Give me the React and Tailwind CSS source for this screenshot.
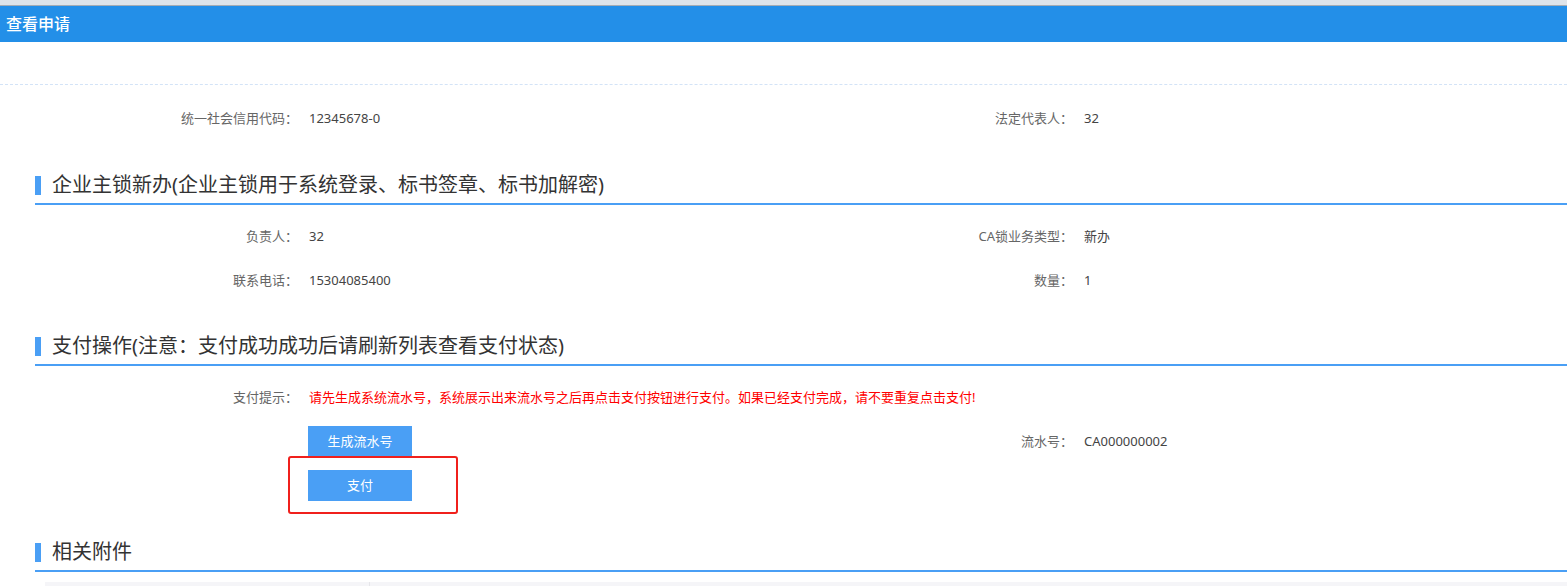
function Field({ label, value }) {
  return (
    <div className="flex items-center h-[44px]">
      <span className="w-[298px] text-right text-[13px] text-[#666]">{label}：</span>
      <span className="pl-[11px] text-[13px] text-[#444]">{value}</span>
    </div>
  )
}

function Row({ children }) {
  return <div className="grid grid-cols-[775px_775px]">{children}</div>
}

function SectionTitle({ title, className = '' }) {
  return (
    <div className={`ml-[35px] h-[38px] flex items-center border-b-2 border-[#4a9ff5] ${className}`}>
      <span className="w-[6px] h-[19px] bg-[#4a9ff5]"></span>
      <span className="ml-[11px] text-[20px] text-[#333] leading-none">{title}</span>
    </div>
  )
}

export default function App() {
  return (
    <div className="relative w-[1567px] h-[586px] overflow-hidden bg-white" style={{ fontFamily: '"Noto Sans", "Noto Sans CJK SC", sans-serif' }}>
      <div className="h-[6px] bg-[#dde4ea] border-b border-[#a4acb4]"></div>
      <div className="h-[36px] bg-[#238fe8] flex items-center px-[6px]">
        <span className="text-[16px] text-white font-medium">查看申请</span>
      </div>
      <div className="h-[42px]"></div>
      <div className="border-t border-dashed border-[#d3e3f7]"></div>

      <div className="pt-[12px]">
        <Row>
          <Field label="统一社会信用代码" value="12345678-0" />
          <Field label="法定代表人" value="32" />
        </Row>
      </div>

      <SectionTitle title="企业主锁新办(企业主锁用于系统登录、标书签章、标书加解密)" className="mt-[26px]" />

      <div className="pt-[10px]">
        <Row>
          <Field label="负责人" value="32" />
          <Field label="CA锁业务类型" value="新办" />
        </Row>
        <Row>
          <Field label="联系电话" value="15304085400" />
          <Field label="数量" value="1" />
        </Row>
      </div>

      <SectionTitle title="支付操作(注意：支付成功成功后请刷新列表查看支付状态)" className="mt-[25px]" />

      <div className="pt-[10px]">
        <div className="flex items-center h-[44px]">
          <span className="w-[298px] text-right text-[13px] text-[#666]">支付提示：</span>
          <span className="pl-[11px] text-[13px] text-[#ff0000]">请先生成系统流水号，系统展示出来流水号之后再点击支付按钮进行支付。如果已经支付完成，请不要重复点击支付!</span>
        </div>
        <Row>
          <div className="pl-[308px] pt-[6px]">
            <button className="w-[104px] h-[31px] bg-[#4a9ff5] text-white text-[13px]">生成流水号</button>
          </div>
          <div className="flex items-center h-[43px]">
            <span className="w-[298px] text-right text-[13px] text-[#666]">流水号：</span>
            <span className="pl-[11px] text-[13px] text-[#444]">CA000000002</span>
          </div>
        </Row>
        <div className="pl-[308px] pt-[7px]">
          <button className="w-[104px] h-[31px] bg-[#4a9ff5] text-white text-[13px]">支付</button>
        </div>
      </div>

      <SectionTitle title="相关附件" className="mt-[33px]" />

      <div className="ml-[45px] mt-[10px] h-[20px] bg-[#f5f5f8] flex">
        <div className="w-[325px] border-r border-[#e6e6ea]"></div>
      </div>

      <div className="absolute left-[288px] top-[456px] w-[170px] h-[58px] border-2 border-[#f0201c] rounded-[3px]"></div>
    </div>
  )
}
